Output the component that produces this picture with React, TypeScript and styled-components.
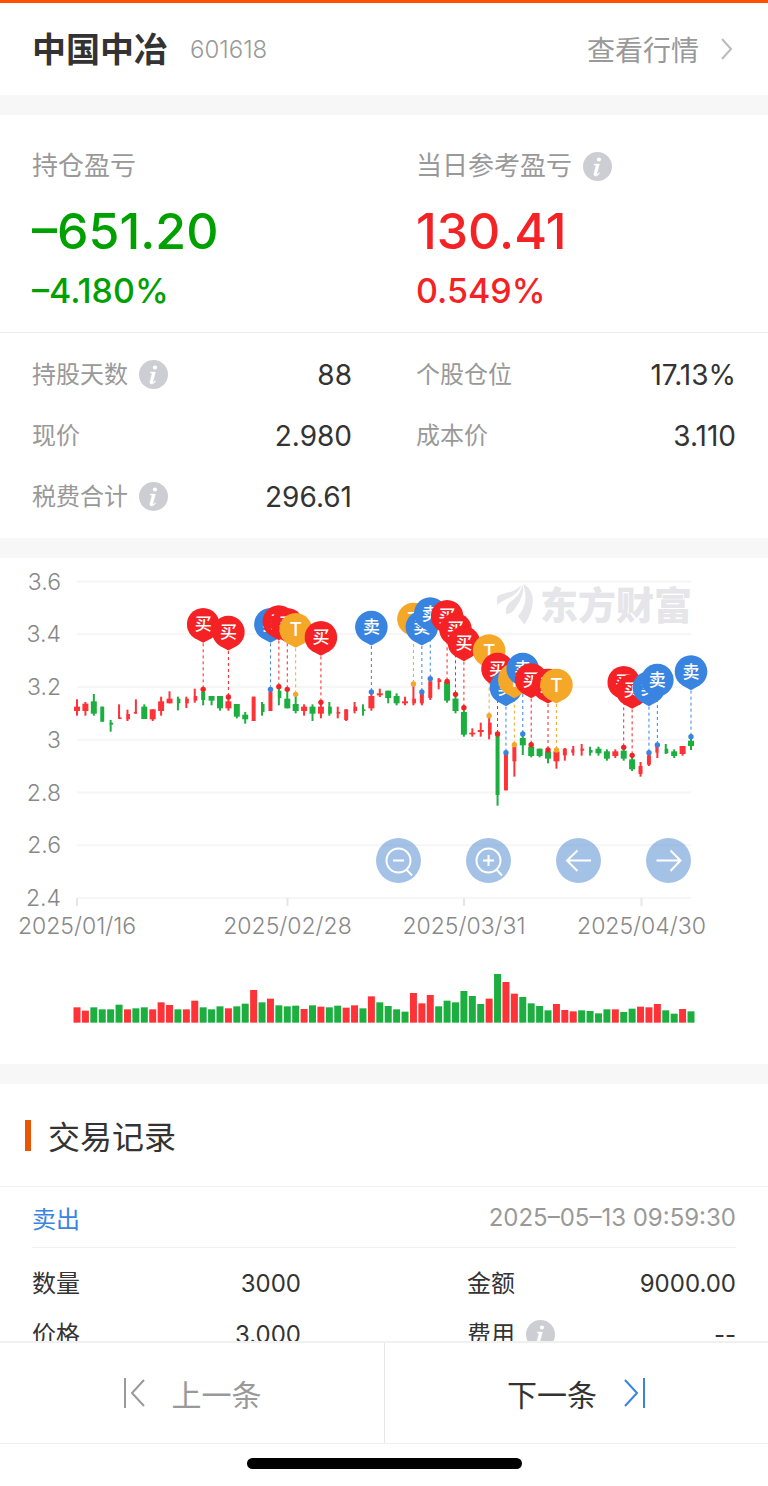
import React from "react";
import styled, { createGlobalStyle } from "styled-components";

const GlobalStyle = createGlobalStyle`
  *, *::before, *::after { box-sizing: border-box; }
  body {
    margin: 0;
    background: #fff;
    color: #333;
    font-family: Inter, "Noto Sans CJK SC", sans-serif;
  }
  h1, h2, p, dl, dt, dd { margin: 0; font-weight: 400; }
`;

const Page = styled.div`
  display: flex;
  flex-direction: column;
  height: 100vh;
  background: #fff;
`;

const Scroller = styled.main`
  flex: 1;
  min-height: 0;
  overflow-y: auto;
  scrollbar-width: none;
  border-top: 3px solid #ff4f00;
`;

const Section = styled.section`
  border-bottom: 20px solid #f7f7f7;
`;

const Header = styled.header`
  display: flex;
  align-items: center;
  height: 112px;
  padding: 0 32px;
  border-bottom: 20px solid #f7f7f7;
`;

const StockName = styled.h1`
  padding-top: 2px;
  font-size: 34px;
  line-height: 48px;
  font-weight: 700;
`;

const StockCode = styled.span`
  margin-left: 22px;
  font-size: 24px;
  font-weight: 300;
  color: #999;
`;

const QuoteLink = styled.a`
  display: flex;
  align-items: center;
  gap: 22px;
  margin-left: auto;
  padding-right: 3px;
  color: #999;
  font-size: 28px;
  text-decoration: none;
`;

const Summary = styled.div`
  display: grid;
  grid-template-columns: 1fr 1fr;
  padding: 33px 0 21px;
  border-bottom: 1px solid #eee;
`;

const SummaryItem = styled.div<{ $tone: "up" | "down" }>`
  padding-left: 32px;
  color: ${(p) => (p.$tone === "up" ? "#f52225" : "#00a000")};
`;

const Label = styled.span<{ $large?: boolean; $dark?: boolean }>`
  display: flex;
  align-items: center;
  gap: 11px;
  font-size: ${(p) => (p.$large ? 26 : 24)}px;
  line-height: 36px;
  color: ${(p) => (p.$dark ? "#333" : "#999")};
`;

const Amount = styled.p`
  margin-top: 15px;
  font-size: 50px;
  line-height: 64px;
  font-weight: 500;
`;

const Percent = styled.p`
  margin-top: 8px;
  font-size: 34px;
  line-height: 40px;
  font-weight: 500;
`;

const Metrics = styled.dl`
  display: grid;
  grid-template-columns: 1fr 1fr;
  column-gap: 64px;
  padding: 11px 32px;
`;

const Metric = styled.div`
  display: flex;
  align-items: center;
  justify-content: space-between;
  height: 61px;
`;

const MetricValue = styled.dd`
  font-size: 28px;
  line-height: 36px;
`;

const InfoButton = styled.button`
  display: block;
  width: 29px;
  height: 29px;
  padding: 0;
  border: 0;
  background: none;
`;

const ChartSection = styled(Section)`
  position: relative;
`;

const ChartSvg = styled.svg`
  display: block;
  width: 100%;
  height: auto;
  font-family: Inter, "Noto Sans CJK SC", sans-serif;
`;

const ChartControls = styled.div`
  position: absolute;
  top: calc(55% + 2px);
  right: 10%;
  display: flex;
  gap: 45px;
`;

const RoundButton = styled.button`
  display: block;
  width: 45px;
  height: 45px;
  padding: 0;
  border: 0;
  border-radius: 50%;
  background: rgba(74, 133, 205, 0.5);
`;

const SectionTitle = styled.h2`
  display: flex;
  align-items: center;
  gap: 17px;
  height: 103px;
  padding-left: 25px;
  border-bottom: 1px solid #f0f0f0;
  font-size: 32px;

  &::before {
    content: "";
    width: 6px;
    height: 31px;
    background: #ea5504;
  }
`;

const Record = styled.article`
  padding: 0 32px;
`;

const RecordHead = styled.div`
  display: flex;
  align-items: center;
  justify-content: space-between;
  height: 61px;
  border-bottom: 1px solid #f0f0f0;
  font-size: 24px;
  color: #999;
`;

const Side = styled.span`
  color: #3884e0;
`;

const RecordGrid = styled.dl`
  display: grid;
  grid-template-columns: 1fr 1fr;
  column-gap: 166px;
  padding: 10px 0;
`;

const RecordCell = styled.div`
  display: flex;
  align-items: center;
  justify-content: space-between;
  height: 51px;
  font-size: 24px;
`;

const Footer = styled.footer`
  border-top: 2px solid #f0f0f0;
`;

const Pager = styled.nav`
  display: grid;
  grid-template-columns: 1fr 1fr;
  border-bottom: 1px solid #f0f0f0;
`;

const PagerButton = styled.button<{ $muted?: boolean }>`
  display: flex;
  align-items: center;
  justify-content: center;
  gap: 25px;
  height: 100px;
  padding: 0;
  border: 0;
  background: none;
  font: inherit;
  font-size: 30px;
  color: ${(p) => (p.$muted ? "#999" : "#333")};

  & + & {
    border-left: 1px solid #e6e6e6;
  }
`;

const HomeIndicator = styled.div`
  width: 275px;
  height: 11px;
  margin: 14px auto 17px;
  border-radius: 6px;
  background: #000;
`;

function Info({ about }: { about: string }) {
  return (
    <InfoButton type="button" aria-label={about}>
      <svg width="29" height="29" viewBox="0 0 28 28" aria-hidden="true">
        <circle cx="14" cy="14" r="14" fill="#cdced3" />
        <circle cx="15.4" cy="7.2" r="2" fill="#fff" />
        <path
          d="M11 11.700h4.800l-2.400 9q-.2 1 .5.8.8-.4 1.600-1.500l.5.4q-1.600 2.800-3.700 2.800-2.200 0-1.700-2.400l1.900-7.200q.2-.9-.6-1h-1z"
          fill="#fff"
          stroke="#fff"
          strokeWidth="0.5"
        />
      </svg>
    </InfoButton>
  );
}

type Candle = [string, number, number, number, number];

// [colour + body side, high, low, body top, body bottom]
// Body side: F full, L left of the wick, R right of the wick, N narrow.
const CANDLES: Candle[] = [
  ["rF", 328, 377, 350, 363], ["rF", 336, 377, 341, 363], ["gF", 312, 377, 334, 371],
  ["gN", 350, 395, 350, 395], ["gR", 390, 425, 398, 404], ["rR", 343, 387, 382, 387],
  ["rR", 359, 393, 372, 388], ["rL", 328, 371, 366, 371], ["gF", 343, 387, 350, 387],
  ["rF", 358, 393, 358, 388], ["rF", 320, 377, 334, 363], ["rF", 304, 340, 326, 340],
  ["gR", 320, 361, 326, 340], ["rR", 320, 354, 326, 340], ["rR", 296, 338, 318, 332],
  ["gN", 300, 346, 305, 330], ["gF", 318, 346, 318, 332], ["gF", 318, 362, 318, 355],
  ["rF", 320, 362, 334, 355], ["gF", 342, 385, 342, 380], ["gF", 366, 401, 374, 388],
  ["rN", 320, 393, 320, 393], ["gR", 336, 377, 342, 366], ["rN", 304, 363, 304, 363],
  ["gR", 296, 346, 302, 324], ["gF", 304, 355, 326, 355], ["gF", 318, 370, 342, 363],
  ["rF", 343, 377, 350, 363], ["gF", 343, 393, 350, 371], ["rF", 340, 385, 350, 371],
  ["gR", 336, 377, 350, 371], ["rR", 350, 385, 366, 371], ["rN", 358, 393, 358, 390],
  ["rR", 336, 370, 350, 363], ["gR", 343, 377, 358, 363], ["rF", 310, 362, 318, 355],
  ["rF", 296, 321, 310, 316], ["gF", 302, 340, 302, 324], ["gF", 310, 346, 318, 340],
  ["rF", 320, 346, 334, 340], ["rR", 285, 346, 326, 340], ["rN", 306, 346, 312, 340],
  ["rN", 270, 330, 274, 324], ["rR", 264, 298, 268, 276], ["gF", 270, 338, 276, 332],
  ["gF", 318, 370, 326, 363], ["gF", 358, 440, 366, 434], ["rF", 415, 440, 428, 433],
  ["rF", 398, 440, 420, 426], ["rR", 380, 448, 398, 434], ["gN", 436, 647, 436, 615],
  ["rN", 490, 601, 490, 601], ["rN", 466, 560, 470, 514], ["gF", 436, 495, 444, 466],
  ["gF", 460, 502, 470, 498], ["gF", 476, 502, 476, 498], ["gF", 480, 520, 484, 506],
  ["rF", 484, 536, 484, 514], ["rN", 474, 512, 476, 496], ["rL", 468, 497, 478, 488],
  ["rR", 462, 497, 476, 482], ["gR", 470, 497, 480, 488], ["gF", 470, 497, 476, 490],
  ["gF", 478, 512, 484, 506], ["rF", 478, 504, 484, 498], ["gF", 476, 512, 482, 506],
  ["gF", 500, 543, 508, 538], ["rN", 516, 560, 528, 552], ["rN", 492, 528, 496, 524],
  ["rL", 466, 504, 470, 488], ["gR", 462, 492, 476, 490], ["gF", 478, 504, 484, 498],
  ["rF", 468, 497, 468, 492], ["gF", 444, 480, 452, 468],
];

const VOLUME_COLORS =
  "rrggggrggrrrgrrgggrggrgrgggrgrggrrgrgggg" + "rrrggggggrgrrggggrrrggggrggrrrggrg";

const VOLUME_TOPS = [
  142, 152, 142, 148, 148, 134, 148, 145, 142, 148, 127, 135, 148, 148, 122, 142, 148, 139,
  145, 139, 131, 90, 127, 116, 136, 139, 137, 147, 136, 140, 142, 137, 143, 136, 145, 109,
  127, 138, 148, 155, 99, 130, 105, 139, 122, 127, 93, 108, 132, 116, 42, 66, 101, 111, 130,
  138, 151, 132, 150, 154, 151, 153, 160, 148, 148, 156, 146, 140, 142, 132, 151, 161, 147,
  154,
];

type PinKind = "buy" | "sell" | "both";

const PINS: [number, number, PinKind][] = [
  [15, 298, "buy"], [18, 321, "buy"], [23, 298, "sell"], [24, 290, "buy"], [25, 298, "buy"],
  [26, 313, "both"], [29, 337, "buy"], [35, 306, "sell"], [40, 282, "both"], [41, 306, "sell"],
  [42, 266, "sell"], [44, 274, "buy"], [45, 313, "buy"], [46, 353, "buy"], [49, 377, "both"],
  [50, 432, "buy"], [51, 488, "sell"], [52, 464, "both"], [53, 432, "sell"], [54, 464, "buy"],
  [56, 480, "buy"], [57, 480, "both"], [65, 472, "buy"], [66, 496, "buy"], [68, 488, "sell"],
  [69, 465, "sell"], [73, 440, "sell"],
];

const PIN_STYLE: Record<PinKind, { fill: string; text: string }> = {
  buy: { fill: "#f52225", text: "买" },
  sell: { fill: "#3884e0", text: "卖" },
  both: { fill: "#f5a728", text: "T" },
};

const xAt = (i: number) => 77 + i * 8.411;
const yAt = (v: number) => 32 + v / 3;
const candleColor = (c: string) => (c === "r" ? "#fd3338" : "#1caf40");

const BODY: Record<string, [number, number]> = {
  F: [-3, 6],
  L: [-2, 3],
  R: [-1, 3.5],
  N: [-2, 4],
};

const GRID = ["3.6", "3.4", "3.2", "3", "2.8", "2.6", "2.4"];
const DATES: [number, string][] = [
  [77, "2025/01/16"],
  [287.5, "2025/02/28"],
  [464, "2025/03/31"],
  [641.5, "2025/04/30"],
];

function Watermark() {
  return (
    <g fill="#e5e5ea">
      <g transform="translate(490 12) scale(0.3333)">
        <path d="M22 106C20 92 20 84 24 78C45 66 70 72 94 44C90 66 60 84 40 92Q28 98 22 106Z" />
        <path d="M97 44C104 60 96 90 70 122Q60 132 48 132C46 118 50 104 60 96C80 82 94 66 97 44Z" />
        <path d="M100 42C120 52 132 76 128 100C125 128 112 150 104 163Q96 156 84 138C108 112 112 80 100 42Z" />
      </g>
      <text x="540" y="61" fontSize="38" fontWeight="900">
        东方财富
      </text>
    </g>
  );
}

function Chart() {
  return (
    <ChartSvg viewBox="0 0 768 506" role="img" aria-label="中国中冶 K线">
      {GRID.map((label, i) => {
        const y = 23.5 + i * 52.75;
        return (
          <g key={label}>
            <line x1="77" x2="691" y1={y} y2={y} stroke="#f6f6f6" strokeWidth="2" />
            <text x="61" y={y + 8} textAnchor="end" fontSize="23" fontWeight="300" fill="#888">
              {label}
            </text>
          </g>
        );
      })}
      {DATES.map(([x, label]) => (
        <g key={label}>
          <line x1={x} x2={x} y1="340" y2="348" stroke="#e6e6e6" strokeWidth="2" />
          <text x={x} y="376" textAnchor="middle" fontSize="23" fontWeight="300" fill="#888">
            {label}
          </text>
        </g>
      ))}
      <Watermark />
      {CANDLES.map(([kind, high, low, top, bottom], i) => {
        const [offset, width] = BODY[kind[1]];
        const x = xAt(i);
        return (
          <g key={i} fill={candleColor(kind[0])}>
            <rect x={x - 1} width="2" y={yAt(high)} height={(low - high) / 3} />
            <rect x={x + offset} width={width} y={yAt(top)} height={(bottom - top) / 3} />
          </g>
        );
      })}
      {VOLUME_TOPS.map((top, i) => (
        <rect
          key={i}
          x={xAt(i) - 3.5}
          width="7"
          y={402 + top / 3}
          height={(188 - top) / 3}
          fill={candleColor(VOLUME_COLORS[i])}
        />
      ))}
      {PINS.map(([i, v, kind]) => (
        <g key={i} transform={`translate(${xAt(i)} ${yAt(v)})`}>
          <line y1="-46" y2="0" stroke={PIN_STYLE[kind].fill} strokeDasharray="3 3" />
          <circle r="2.7" fill={PIN_STYLE[kind].fill} />
        </g>
      ))}
      {PINS.map(([i, v, kind]) => (
        <g key={i} transform={`translate(${xAt(i)} ${yAt(v) - 65})`}>
          <path
            d="M0 18.500L-8.500 13.900A16.300 16.300 0 1 1 8.500 13.900Z"
            fill={PIN_STYLE[kind].fill}
          />
          <text
            y={kind === "both" ? 7 : 6}
            textAnchor="middle"
            fontSize={kind === "both" ? 19 : 17}
            fontWeight="500"
            fill="#fff"
          >
            {PIN_STYLE[kind].text}
          </text>
        </g>
      ))}
    </ChartSvg>
  );
}

const LENS = "M34.500 22.500a12 12 0 1 1-24 0a12 12 0 1 1 24 0M30 31L36 37.500";

const CONTROLS = [
  { label: "缩小", d: `${LENS}M17 22.500H28` },
  { label: "放大", d: `${LENS}M17 22.500H28M22.500 17V28` },
  { label: "向左", d: "M35 22.500H11M21.500 12.500L11 22.500L21.500 33" },
  { label: "向右", d: "M10.500 22.500H34.500M24.500 12.500L34.500 22.500L24.500 33" },
];

export default function App() {
  return (
    <>
      <GlobalStyle />
      <Page>
        <Scroller>
          <Header>
            <StockName>中国中冶</StockName>
            <StockCode>601618</StockCode>
            <QuoteLink href="#quote">
              查看行情
              <svg width="12" height="22" viewBox="0 0 12 22" fill="none" stroke="#bbb" strokeWidth="2">
                <path d="M1 1l9 10-9 10" />
              </svg>
            </QuoteLink>
          </Header>

          <Section>
            <Summary>
              <SummaryItem $tone="down">
                <Label $large>持仓盈亏</Label>
                <Amount>–651.20</Amount>
                <Percent>–4.180%</Percent>
              </SummaryItem>
              <SummaryItem $tone="up">
                <Label $large>
                  当日参考盈亏
                  <Info about="当日参考盈亏说明" />
                </Label>
                <Amount>130.41</Amount>
                <Percent>0.549%</Percent>
              </SummaryItem>
            </Summary>
            <Metrics>
              <Metric>
                <Label as="dt">
                  持股天数
                  <Info about="持股天数说明" />
                </Label>
                <MetricValue>88</MetricValue>
              </Metric>
              <Metric>
                <Label as="dt">个股仓位</Label>
                <MetricValue>17.13%</MetricValue>
              </Metric>
              <Metric>
                <Label as="dt">现价</Label>
                <MetricValue>2.980</MetricValue>
              </Metric>
              <Metric>
                <Label as="dt">成本价</Label>
                <MetricValue>3.110</MetricValue>
              </Metric>
              <Metric>
                <Label as="dt">
                  税费合计
                  <Info about="税费合计说明" />
                </Label>
                <MetricValue>296.61</MetricValue>
              </Metric>
            </Metrics>
          </Section>

          <ChartSection>
            <Chart />
            <ChartControls>
              {CONTROLS.map((c) => (
                <RoundButton key={c.label} type="button" aria-label={c.label}>
                  <svg width="45" height="45" viewBox="0 0 45 45" fill="none" stroke="#fff" strokeWidth="2">
                    <path d={c.d} />
                  </svg>
                </RoundButton>
              ))}
            </ChartControls>
          </ChartSection>

          <SectionTitle>交易记录</SectionTitle>
          <Record>
            <RecordHead>
              <Side>卖出</Side>
              <time dateTime="2025-05-13T09:59:30">2025–05–13 09:59:30</time>
            </RecordHead>
            <RecordGrid>
              <RecordCell>
                <Label as="dt" $dark>数量</Label>
                <dd>3000</dd>
              </RecordCell>
              <RecordCell>
                <Label as="dt" $dark>金额</Label>
                <dd>9000.00</dd>
              </RecordCell>
              <RecordCell>
                <Label as="dt" $dark>价格</Label>
                <dd>3.000</dd>
              </RecordCell>
              <RecordCell>
                <Label as="dt" $dark>
                  费用
                  <Info about="费用说明" />
                </Label>
                <dd>--</dd>
              </RecordCell>
            </RecordGrid>
          </Record>
        </Scroller>

        <Footer>
          <Pager>
            <PagerButton type="button" $muted>
              <svg width="24" height="30" viewBox="0 0 24 30" fill="none" stroke="#999" strokeWidth="2">
                <path d="M2 0V30M21 2L9 15l12 13" />
              </svg>
              上一条
            </PagerButton>
            <PagerButton type="button">
              下一条
              <svg width="24" height="30" viewBox="0 0 24 30" fill="none" stroke="#3884e0" strokeWidth="2">
                <path d="M22 0V30M3 2l12 13L3 28" />
              </svg>
            </PagerButton>
          </Pager>
          <HomeIndicator />
        </Footer>
      </Page>
    </>
  );
}
